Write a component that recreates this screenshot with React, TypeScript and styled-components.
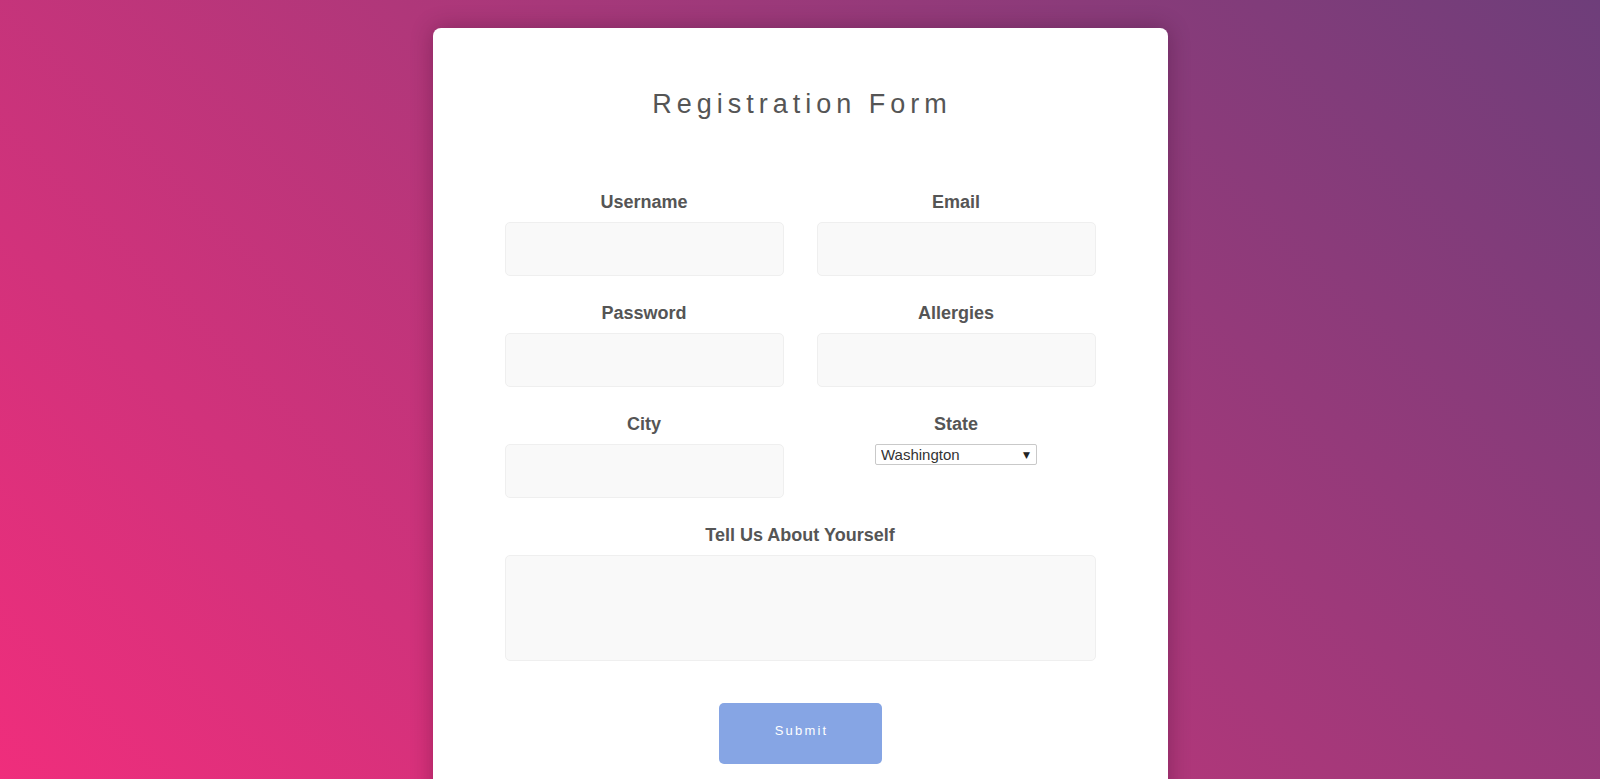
import React from "react";
import styled, { createGlobalStyle } from "styled-components";

const GlobalStyle = createGlobalStyle`
  html, body {
    margin: 0;
    padding: 0;
  }
  body {
    font-family: "Liberation Sans", Arial, sans-serif;
    background: linear-gradient(45deg, #f22d7c 0%, #b0377a 50%, #6e3e7a 100%);
    min-height: 100vh;
  }
  * { box-sizing: border-box; }
`;

const Page = styled.div`
  min-height: 100vh;
  display: flex;
  justify-content: center;
  padding-top: 28px;
`;

const Card = styled.div`
  width: 735px;
  background: #ffffff;
  border-radius: 8px;
  box-shadow: 0 0 22px rgba(40, 0, 30, 0.3);
  padding: 60px 72px 60px;
  display: flex;
  flex-direction: column;
  align-items: center;
`;

const Title = styled.h1`
  margin: 0;
  font-family: "Liberation Sans", Arial, sans-serif;
  font-weight: 400;
  font-size: 27px;
  line-height: 32px;
  letter-spacing: 5px;
  color: #555555;
  padding-left: 4px;
`;

const Form = styled.form`
  margin-top: 72px;
  width: 591px;
  display: grid;
  grid-template-columns: 279px 279px;
  column-gap: 33px;
  row-gap: 27px;
`;

const Field = styled.div<{ $full?: boolean }>`
  display: flex;
  flex-direction: column;
  align-items: center;
  gap: 9px;
  grid-column: ${(p) => (p.$full ? "1 / span 2" : "auto")};
`;

const Label = styled.label`
  font-family: "Liberation Sans", Arial, sans-serif;
  font-size: 18px;
  line-height: 21px;
  font-weight: 700;
  color: #555555;
`;

const TextInput = styled.input`
  width: 100%;
  height: 54px;
  background: #f9f9f9;
  border: 1px solid #efefef;
  border-radius: 5px;
  outline: none;
  padding: 0 12px;
  font-family: "Liberation Sans", Arial, sans-serif;
  font-size: 15px;
`;

const TextArea = styled.textarea`
  width: 100%;
  height: 106px;
  background: #f9f9f9;
  border: 1px solid #efefef;
  border-radius: 5px;
  outline: none;
  resize: none;
  padding: 10px 12px;
  font-family: "Liberation Sans", Arial, sans-serif;
  font-size: 15px;
`;

const SelectWrap = styled.div`
  position: relative;
  width: 162px;
  height: 21px;
`;

const Select = styled.select`
  appearance: none;
  -webkit-appearance: none;
  width: 100%;
  height: 100%;
  border: 1px solid #c9c9c9;
  border-radius: 2px;
  background: #ffffff;
  padding: 0 20px 0 5px;
  font-family: "Liberation Sans", Arial, sans-serif;
  font-size: 15px;
  line-height: 19px;
  color: #333333;
  outline: none;
`;

const Arrow = styled.span`
  position: absolute;
  right: 7px;
  top: 50%;
  transform: translateY(-50%);
  font-size: 9px;
  color: #222222;
  pointer-events: none;
  font-family: "DejaVu Sans", sans-serif;
`;

const SubmitButton = styled.button`
  margin-top: 42px;
  width: 163px;
  height: 61px;
  border: none;
  border-radius: 5px;
  background: #86a5e4;
  color: #ffffff;
  font-family: "Liberation Sans", Arial, sans-serif;
  font-size: 13px;
  letter-spacing: 2.2px;
  padding: 0 0 6px 3px;
  cursor: pointer;
`;

export default function App() {
  return (
    <>
      <GlobalStyle />
      <Page>
        <Card>
          <Title>Registration Form</Title>
          <Form onSubmit={(e) => e.preventDefault()}>
            <Field>
              <Label>Username</Label>
              <TextInput type="text" />
            </Field>
            <Field>
              <Label>Email</Label>
              <TextInput type="email" />
            </Field>
            <Field>
              <Label>Password</Label>
              <TextInput type="password" />
            </Field>
            <Field>
              <Label>Allergies</Label>
              <TextInput type="text" />
            </Field>
            <Field>
              <Label>City</Label>
              <TextInput type="text" />
            </Field>
            <Field>
              <Label>State</Label>
              <SelectWrap>
                <Select defaultValue="Washington">
                  <option>Washington</option>
                  <option>Oregon</option>
                  <option>California</option>
                </Select>
                <Arrow>▼</Arrow>
              </SelectWrap>
            </Field>
            <Field $full>
              <Label>Tell Us About Yourself</Label>
              <TextArea />
            </Field>
          </Form>
          <SubmitButton type="submit">Submit</SubmitButton>
        </Card>
      </Page>
    </>
  );
}
